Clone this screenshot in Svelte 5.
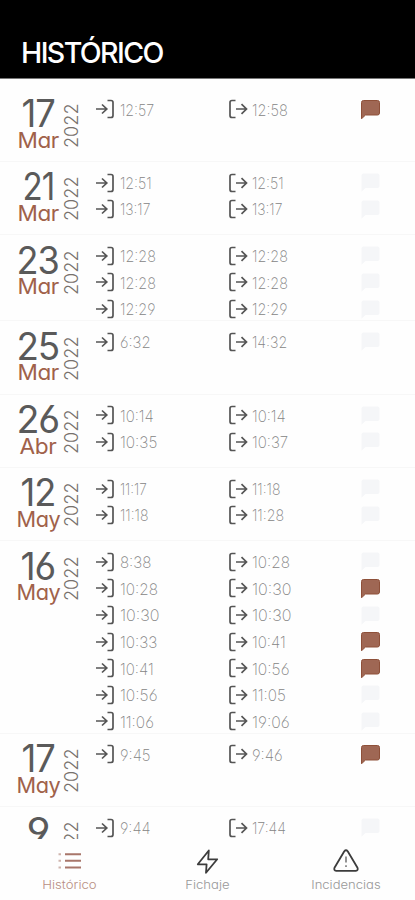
<script>
  const days = [
    { day: '17', w: 28.5, month: 'Mar', mw: 38.5, rows: [['12:57', '12:58', true]] },
    { day: '21', w: 27, month: 'Mar', mw: 38.5, rows: [['12:51', '12:51'], ['13:17', '13:17']] },
    { day: '23', w: 37.5, month: 'Mar', mw: 38.5, rows: [['12:28', '12:28'], ['12:28', '12:28'], ['12:29', '12:29']] },
    { day: '25', w: 38, month: 'Mar', mw: 38.5, rows: [['6:32', '14:32']] },
    { day: '26', w: 38, month: 'Abr', mw: 34, rows: [['10:14', '10:14'], ['10:35', '10:37']] },
    { day: '12', w: 30, month: 'May', mw: 41, rows: [['11:17', '11:18'], ['11:18', '11:28']] },
    {
      day: '16', w: 30, month: 'May', mw: 41,
      rows: [
        ['8:38', '10:28'], ['10:28', '10:30', true], ['10:30', '10:30'], ['10:33', '10:41', true],
        ['10:41', '10:56', true], ['10:56', '11:05'], ['11:06', '19:06']
      ]
    },
    { day: '17', w: 28.5, month: 'May', mw: 41, rows: [['9:45', '9:46', true]] },
    { day: '9', w: 18, month: 'May', mw: 41, rows: [['9:44', '17:44']] }
  ];

  const advance = { 0: 10.6, 1: 4.8, 2: 8.5, 3: 8.4, 4: 8.4, 5: 8.4, 6: 8.6, 7: 7.2, 8: 8.9, 9: 8.6, ':': 4 };
  const timeWidth = (t) => [...t].reduce((sum, c) => sum + advance[c], 0) - 0.8;
</script>

{#snippet label(text, size, width, cls)}
  <svg class="label {cls}" {width} height={size * 0.727} aria-label={text}>
    <text
      x={-size * 0.07}
      y={size * 0.727}
      font-size={size}
      textLength={width + size * 0.13}
      lengthAdjust="spacingAndGlyphs">{text}</text>
  </svg>
{/snippet}

{#snippet enter()}
  <svg class="arrow" width="20" height="20" viewBox="0 0 20 20">
    <path d="M1 10H12M7 5.5L11.8 10L7 14.5" />
    <path d="M12.5 1.5H16Q18 1.5 18 3.5V16.5Q18 18.5 16 18.5H12.5" />
  </svg>
{/snippet}

{#snippet leave()}
  <svg class="arrow" width="20" height="20" viewBox="0 0 20 20">
    <path d="M8 10H18.5M13.5 5.2L18.5 10L13.5 14.8" />
    <path d="M7.5 1.5H4Q2 1.5 2 3.5V16.5Q2 18.5 4 18.5H7.5" />
  </svg>
{/snippet}

<div class="app">
  <header>{@render label('HISTÓRICO', 28.5, 138, 'title')}</header>
  <main>
    {#each days as d}
      <section>
        <div class="date">
          <div class="daymonth">
            {@render label(d.day, 37.5, d.w, 'day')}
            {@render label(d.month, 21.8, d.mw, 'month')}
          </div>
          <svg class="label year" width="14" height="44" aria-label="2022">
            <text transform="translate(13.6 45) rotate(-90)" font-size="18.5" textLength="44.5" lengthAdjust="spacingAndGlyphs">2022</text>
          </svg>
        </div>
        <div class="rows">
          {#each d.rows as r}
            <div class="row">
              <div class="cell">{@render enter()}{@render label(r[0], 15.6, timeWidth(r[0]), 'time')}</div>
              <div class="cell">{@render leave()}{@render label(r[1], 15.6, timeWidth(r[1]), 'time')}</div>
              <svg class="note" class:on={r[2]} width="19" height="19" viewBox="0 0 19 19">
                <path d="M2.5 .5H16.5Q18.5 .5 18.5 2.5V13Q18.5 15 16.5 15H4.5L.5 18.8V2.5Q.5 .5 2.5 .5Z" />
              </svg>
            </div>
          {/each}
        </div>
      </section>
    {/each}
  </main>
  <nav>
    <div class="tab active">
      <svg class="icon" width="24" height="24" viewBox="0 0 24 24">
        <path d="M8 5.2H24M8 11.8H24M8 18.5H24" />
        <path class="dots" d="M1.5 5.2H4M1.5 11.8H4M1.5 18.5H4" />
      </svg>
      {@render label('Histórico', 11.2, 53, 'tabname')}
    </div>
    <div class="tab">
      <svg class="icon" width="24" height="26" viewBox="0 0 24 26">
        <path d="M13.8 1.5L2.8 15.3H11.6L11 23.8L22.2 10.3H13.2Z" />
      </svg>
      {@render label('Fichaje', 11.2, 43, 'tabname')}
    </div>
    <div class="tab">
      <svg class="icon" width="26" height="24" viewBox="0 0 26 24">
        <path d="M11.3 2.3Q13 .2 14.7 2.3L24.5 18.7Q25.5 21.5 22.8 21.8H3.2Q.5 21.5 1.5 18.7Z" />
        <path class="bang" d="M13 7.5V13.5M13 16.2V18" />
      </svg>
      {@render label('Incidencias', 11.2, 68, 'tabname')}
    </div>
  </nav>
</div>

<style>
  :global(body) { margin: 0; background: #fefefe; }
  .app {
    width: 415px;
    height: 900px;
    display: flex;
    flex-direction: column;
    overflow: hidden;
    background: #fefefe;
    font-family: Inter, 'Liberation Sans', sans-serif;
    font-feature-settings: 'cv11', 'cv03', 'cv04';
  }
  .label { display: block; overflow: visible; flex: none; }
  header {
    box-sizing: border-box;
    height: 79px;
    flex: none;
    padding: 41.5px 0 0 23px;
    background: #000;
    border-bottom: 1px solid #777;
  }
  .title { fill: #fff; font-weight: 500; letter-spacing: -1.6px; }
  main { height: 760px; flex: none; overflow: hidden; padding-top: 9.6px; box-sizing: border-box; }
  section {
    box-sizing: border-box;
    min-height: 73.3px;
    display: flex;
    padding-top: 7.4px;
    border-bottom: 1px solid #f7f7f7;
  }
  .date { width: 95px; flex: none; display: flex; padding-top: 4.1px; }
  .daymonth { width: 64px; padding-left: 12px; box-sizing: border-box; display: flex; flex-direction: column; align-items: center; gap: 4.2px; }
  .day { fill: #5a5a5a; font-weight: 400; letter-spacing: -1px; }
  .month { fill: #a0614a; font-weight: 400; letter-spacing: -.4px; }
  .year { fill: #77716c; font-weight: 300; margin-top: 3px; }
  .rows { flex: 1; margin-bottom: -2px; }
  .row { height: 26.58px; display: flex; align-items: center; }
  .cell { width: 132.5px; display: flex; align-items: center; gap: 5.5px; }
  .arrow { flex: none; fill: none; stroke: #555; stroke-width: 1.7; }
  .time { fill: #858585; font-weight: 200; margin-top: 2px; }
  .note { flex: none; margin-left: 1px; fill: #f5f6f8; }
  .note.on { fill: #9f6754; stroke: #8e5039; stroke-width: 1; }
  nav { flex: 1; display: flex; padding: 10px 0 0; }
  .tab { flex: 1; display: flex; flex-direction: column; align-items: center; justify-content: space-between; height: 39.8px; }
  .icon { fill: none; stroke: #3c3c3c; stroke-width: 1.8; stroke-linejoin: round; }
  .active .icon { stroke: #a8766a; stroke-width: 2; }
  .active .dots { stroke: #cfb5ae; }
  .bang { stroke: #888; }
  .tabname { fill: #999; font-weight: 300; }
  .active .tabname { fill: #b98f84; }
</style>
